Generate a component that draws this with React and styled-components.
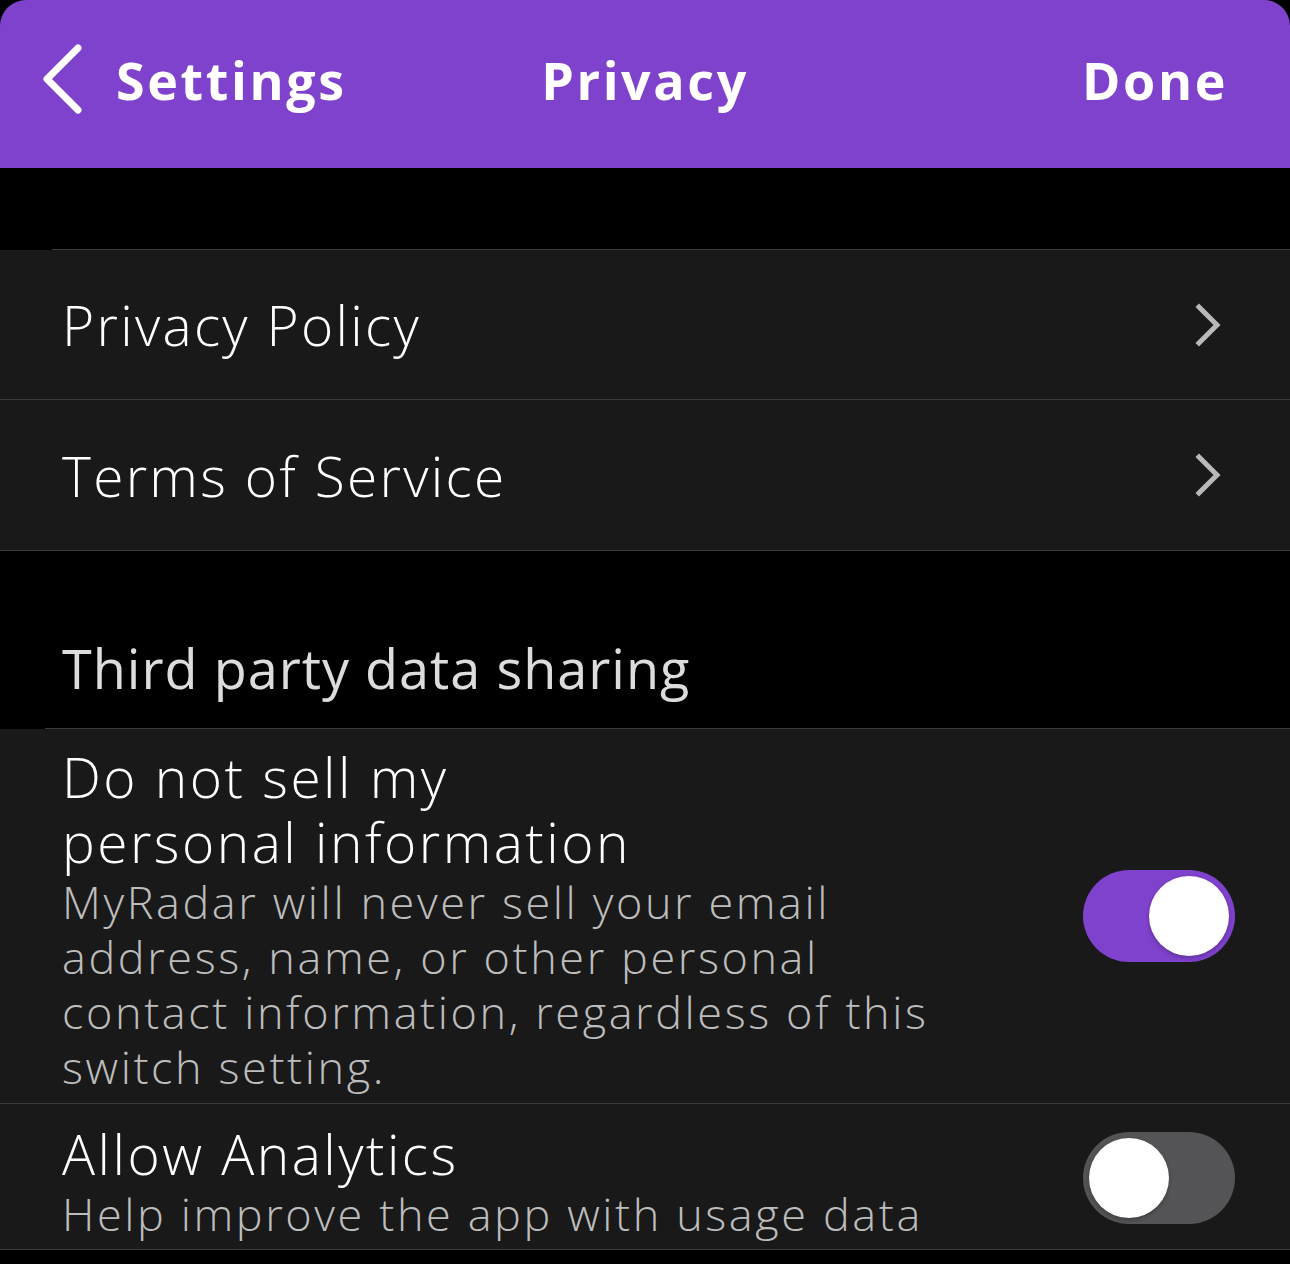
import React from 'react';
import styled, { createGlobalStyle } from 'styled-components';

const GlobalStyle = createGlobalStyle`
  html, body {
    margin: 0;
    padding: 0;
    background: #000000;
  }
  body {
    font-family: 'Open Sans', 'Liberation Sans', sans-serif;
    -webkit-font-smoothing: antialiased;
  }
`;

const Page = styled.div`
  width: 1290px;
  min-height: 1264px;
  background: #000000;
  color: #ffffff;
`;

const Header = styled.header`
  height: 168px;
  background: #7f42cc;
  border-radius: 26px 26px 0 0;
  display: grid;
  grid-template-columns: 1fr auto 1fr;
  align-items: center;
  padding: 0 40px 10px 40px;
  box-sizing: border-box;
`;

const BackButton = styled.div`
  display: flex;
  align-items: center;
  gap: 32px;
`;

const HeaderText = styled.span`
  font-size: 52px;
  font-weight: 700;
  color: #ffffff;
  letter-spacing: 2.6px;
  justify-self: ${(props) => props.align || 'start'};
  margin-right: ${(props) => props.inset || 0}px;
`;

const Spacer = styled.div`
  height: ${(props) => props.h}px;
`;

const Row = styled.div`
  display: flex;
  align-items: center;
  justify-content: space-between;
  background: #19191a;
  min-height: ${(props) => props.h || 150}px;
  padding: ${(props) => props.top || 0}px 55px 0 62px;
  box-sizing: border-box;
  border-bottom: 1px solid #3a3a3c;
`;

const Divider = styled.div`
  height: 1px;
  background: #3a3a3c;
  margin-left: ${(props) => props.inset || 0}px;
`;

const RowLabel = styled.span`
  font-size: 55px;
  font-weight: 300;
  letter-spacing: 2.3px;
  color: #ffffff;
`;

const ChevronSlot = styled.div`
  display: flex;
  margin-right: 11px;
`;

const SectionTitle = styled.div`
  font-size: 54px;
  font-weight: 400;
  letter-spacing: 1px;
  color: #dcdcdc;
  padding: 0 0 23px 62px;
`;

const TextBlock = styled.div`
  display: flex;
  flex-direction: column;
`;

const Title = styled.div`
  font-size: 55px;
  font-weight: 300;
  letter-spacing: 2.5px;
  line-height: 65px;
  color: #ffffff;
`;

const Description = styled.div`
  font-size: 45px;
  font-weight: 300;
  letter-spacing: 2.6px;
  line-height: 55px;
  color: #bdbdbd;
`;

const ToggleSlot = styled.div`
  display: flex;
  margin-top: ${(props) => props.shift || 0}px;
`;

const Track = styled.div`
  width: 152px;
  height: 92px;
  border-radius: 46px;
  background: ${(props) => (props.on ? '#7f42cc' : '#545457')};
  display: flex;
  align-items: center;
  justify-content: ${(props) => (props.on ? 'flex-end' : 'flex-start')};
  padding: 0 6px;
  box-sizing: border-box;
  flex-shrink: 0;
`;

const Knob = styled.div`
  width: 80px;
  height: 80px;
  border-radius: 50%;
  background: #ffffff;
  box-shadow: 0 2px 4px rgba(0, 0, 0, 0.25);
`;

function Toggle({ on, shift }) {
  return (
    <ToggleSlot shift={shift}>
      <Track on={on ? 1 : 0}>
        <Knob />
      </Track>
    </ToggleSlot>
  );
}

function BackChevron() {
  return (
    <svg width="44" height="72" viewBox="0 0 44 72">
      <path d="M38 5 L7 36 L38 67" fill="none" stroke="#ffffff" strokeWidth="7" strokeLinecap="round" strokeLinejoin="round" />
    </svg>
  );
}

function Chevron() {
  return (
    <ChevronSlot>
      <svg width="30" height="44" viewBox="0 0 30 44">
        <path d="M5 4 L23 22 L5 40" fill="none" stroke="#b9b9bb" strokeWidth="5" strokeLinecap="square" />
      </svg>
    </ChevronSlot>
  );
}

export default function App() {
  return (
    <Page>
      <GlobalStyle />
      <Header>
        <BackButton>
          <BackChevron />
          <HeaderText>Settings</HeaderText>
        </BackButton>
        <HeaderText align="center">Privacy</HeaderText>
        <HeaderText align="end" inset={22}>Done</HeaderText>
      </Header>

      <Spacer h={81} />
      <Divider inset={52} />
      <Row h={150}>
        <RowLabel>Privacy Policy</RowLabel>
        <Chevron />
      </Row>
      <Row h={151}>
        <RowLabel>Terms of Service</RowLabel>
        <Chevron />
      </Row>

      <Spacer h={80} />
      <SectionTitle>Third party data sharing</SectionTitle>
      <Divider inset={45} />
      <Row h={375} top={6}>
        <TextBlock>
          <Title>
            Do not sell my
            <br />
            personal information
          </Title>
          <Description>
            MyRadar will never sell your email
            <br />
            address, name, or other personal
            <br />
            contact information, regardless of this
            <br />
            switch setting.
          </Description>
        </TextBlock>
        <Toggle on shift={-6} />
      </Row>
      <Row h={146} top={8}>
        <TextBlock>
          <Title>Allow Analytics</Title>
          <Description>Help improve the app with usage data</Description>
        </TextBlock>
        <Toggle shift={-6} />
      </Row>
    </Page>
  );
}
